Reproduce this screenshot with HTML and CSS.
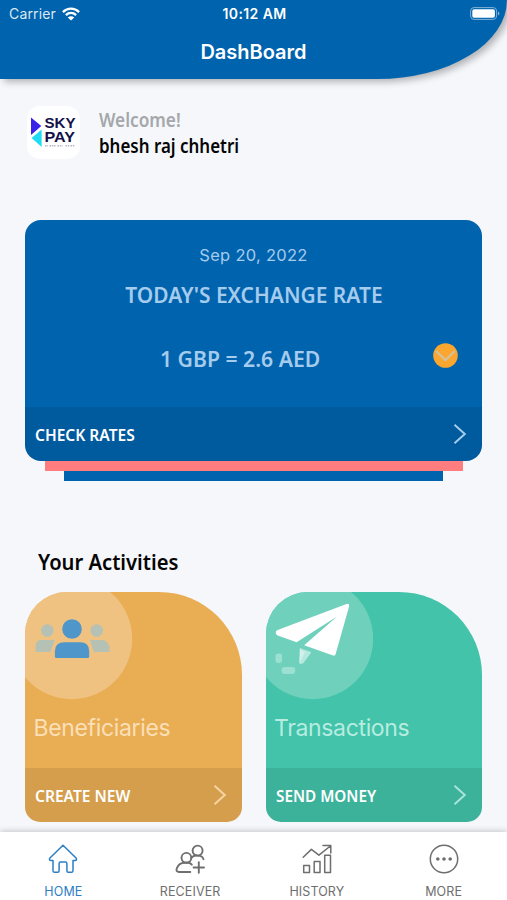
FILE: index.html
```html
<!DOCTYPE html>
<html lang="en">
<head>
<meta charset="utf-8">
<title>DashBoard</title>
<link rel="stylesheet" href="styles.css">
</head>
<body>
<div class="app">
  <header class="header">
    <div class="status">
      <div class="carrier"><span>Carrier</span>
        <svg class="wifi" width="18" height="14" viewBox="0 0 18 14" fill="none" stroke="#fff" stroke-width="2.3"><path d="M.9 5.1C5.6.5 12.4.5 17.1 5.1M3.9 8.1c3-2.8 7.2-2.8 10.2 0"/><path d="M9 13.6 5.8 10.5c1.8-1.6 4.6-1.6 6.4 0z" fill="#fff" stroke="none"/></svg>
      </div>
      <div class="time">10:12 AM</div>
      <svg class="battery" width="30" height="13" viewBox="0 0 30 13"><rect x=".6" y=".6" width="26" height="11.8" rx="3.4" fill="none" stroke="#83b1d8"/><rect x="2.3" y="2.3" width="22.6" height="8.4" rx="1.8" fill="#fff"/><path d="M28 4.5c2 .8 2 3.2 0 4z" fill="#83b1d8"/></svg>
    </div>
    <h1 class="title">DashBoard</h1>
  </header>

  <main class="content">
    <section class="profile">
      <svg class="logo" width="53" height="53" viewBox="0 0 53 53">
        <rect width="53" height="53" rx="13" fill="#fff"/>
        <path d="M4 11.5 14.3 20 4 29z" fill="#3a20e8"/><path d="M14.600 23.500V41L4.600 32z" fill="#20dcf2"/>
        <g class="logo-text"><text x="17.500" y="22" textLength="31" lengthAdjust="spacingAndGlyphs">SKY</text><text x="17.500" y="36" textLength="30.500" lengthAdjust="spacingAndGlyphs">PAY</text></g>
        <path d="M18 39.800h3m1.500 0h6m2 0h5m3 0h4m1 0h4" stroke="#b5b5c2" stroke-width="1.400" stroke-dasharray="1.500 .800"/>
      </svg>
      <div class="greeting">
        <div class="welcome"><span>Welcome!</span></div>
        <div class="name"><span>bhesh raj chhetri</span></div>
      </div>
    </section>

    <section class="rates">
      <div class="rate-card">
        <div class="rate-body">
          <div class="date">Sep 20, 2022</div>
          <div class="rate-title"><span>TODAY'S EXCHANGE RATE</span></div>
          <div class="rate-row">
            <span class="rate-value">1 GBP = 2.6 AED</span>
            <svg class="expand" width="25" height="25" viewBox="0 0 25 25"><circle cx="12.500" cy="12.500" r="12.300" fill="#faa62f"/><path d="m3.200 8 9.300 9.300L21.800 8" fill="none" stroke="#d3c29f" stroke-width="2.100"/></svg>
          </div>
        </div>
        <div class="card-foot"><span class="action check">CHECK RATES</span><svg class="chev" width="14" height="22" viewBox="0 0 14 22"><path d="m1.500 1.800 10.300 9.200L1.500 20.200"/></svg></div>
      </div>
      <div class="layer layer-pink"></div>
      <div class="layer layer-blue"></div>
    </section>

    <h2 class="heading"><span>Your Activities</span></h2>
    <section class="grid">
      <article class="tile orange">
        <div class="tile-body">
          <svg class="art" width="109" height="109" viewBox="0 0 109 109">
            <circle cx="46.800" cy="46.800" r="60.400" fill="#f0c281"/>
            <g fill="#b4c1b4"><circle cx="22.300" cy="38.500" r="6.300"/><circle cx="71.700" cy="38.500" r="6.300"/><path d="M16 48h13.500l-4 12H10.600v-6.500Q11 48 16 48zM65 48h12.500q5 .5 7 6.500V60H69z"/></g>
            <g fill="#4f96ca"><circle cx="47" cy="37" r="9.800"/><path d="M39.500 50.300h15.700q9 0 9 9v5.200q0 1.500-1.500 1.500H31.400q-1.500 0-1.500-1.500v-5.200q0-9 9.600-9z"/></g>
          </svg>
          <div class="label">Beneficiaries</div>
        </div>
        <div class="card-foot"><span class="action create">CREATE NEW</span><svg class="chev" width="14" height="22" viewBox="0 0 14 22"><path d="m1.500 1.800 10.300 9.200L1.500 20.200"/></svg></div>
      </article>
      <article class="tile green">
        <div class="tile-body">
          <svg class="art" width="109" height="109" viewBox="0 0 109 109">
            <circle cx="46.800" cy="46.800" r="60.400" fill="#6fd1bc"/>
            <path d="M11 38.300 80.500 12.100q3.300-1 2.600 2.300L69.500 62.600q-.5 1.600-2.500 1L38.200 53.200 71 24.400 30.600 50.200 11 43.200q-2.500-3 0-4.900z" fill="#fff"/>
            <path d="m33.800 56 11.600 4.200-7.600 10.200q-3.400 3-4.800 0z" fill="#b7e8de"/><path d="M34 57v13l5-10z" fill="#d2f1eb"/>
            <g fill="#9be0d1"><rect x="9.500" y="61.500" width="6.600" height="9.500" rx="3"/><rect x="15.600" y="75" width="13.600" height="7" rx="3"/></g>
          </svg>
          <div class="label">Transactions</div>
        </div>
        <div class="card-foot"><span class="action send">SEND MONEY</span><svg class="chev" width="14" height="22" viewBox="0 0 14 22"><path d="m1.500 1.800 10.300 9.200L1.500 20.200"/></svg></div>
      </article>
    </section>
  </main>

  <nav class="tabs">
    <a class="tab active"><svg width="30" height="30" viewBox="0 0 30 30"><path d="M15 1.200 28.300 14.200Q29 16.500 27.200 16.500H25v10.200q0 1.600-1.600 1.600h-3.200q-1.300 0-1.300-1.500v-7.300q0-1.500-1.400-1.500h-5q-1.400 0-1.400 1.500v7.300q0 1.500-1.300 1.500H6.600Q5 28.300 5 26.700V16.500H2.800Q1 16.500 1.700 14.200z"/></svg><span>HOME</span></a>
    <a class="tab"><svg width="30" height="30" viewBox="0 0 30 30"><g stroke-width="1.900"><circle cx="22.600" cy="6.600" r="5"/><circle cx="11.400" cy="13.800" r="4.900"/><path d="M16.300 13.800Q18.500 11 22.600 11.600q5 0 5.900 3.600M15.300 28H4.200Q.5 28 1.800 24.300 4 18.700 9.500 18.700h4q2 .3 3.300 2M23.800 18.300v10.500M18.600 23.500H29"/></g></svg><span>RECEIVER</span></a>
    <a class="tab"><svg width="30" height="30" viewBox="0 0 30 30"><path d="M1.200 13.300 9.400 5.400l7.500 5.800L28.400 2M21 1.500h7.800V9M1.700 21.500h5.800v7H1.700zM12.200 17.500H18v11h-5.800zM22.700 11.200h5.800v17.300h-5.800z"/></svg><span>HISTORY</span></a>
    <a class="tab"><svg width="30" height="30" viewBox="0 0 30 30"><circle cx="15" cy="15" r="13.700"/><g class="dots"><circle cx="8.800" cy="15" r="1.800"/><circle cx="15" cy="15" r="1.800"/><circle cx="21.200" cy="15" r="1.800"/></g></svg><span>MORE</span></a>
  </nav>
</div>
</body>
</html>
```
FILE: styles.css
```css
* { box-sizing: border-box; }
body { margin: 0; background: #f5f7fb; font-family: Inter, "Liberation Sans", sans-serif; }
.app { width: 507px; height: 900px; display: flex; flex-direction: column; overflow: hidden; }

.header { height: 79px; flex: none; background: #0063ad; color: #fff; border-bottom-right-radius: 130px 79px; box-shadow: 4px 3px 7px rgba(0, 0, 0, .28); }
.status { display: grid; grid-template-columns: 1fr auto 1fr; height: 27px; align-items: center; padding: 0 7px 0 9px; }
.carrier { display: flex; align-items: center; gap: 6px; font-size: 14px; letter-spacing: .15px; color: #dbe9f5; }
.time { font-size: 14px; font-weight: 600; letter-spacing: .4px; }
.battery { justify-self: end; }
.title { margin: 12px 0 0; font-size: 20px; line-height: 26px; font-weight: 600; text-align: center; letter-spacing: 0; }

.content { flex: 1; padding: 27px 25px 0; }
.profile { display: flex; height: 53px; gap: 19px; padding-left: 2px; }
.logo-text { font: 700 15.500px "Liberation Sans", sans-serif; fill: #14124a; }
.greeting, .rate-title, .rate-value, .action, .heading { font-family: "Noto Sans", "Open Sans", sans-serif; font-weight: 600; }
.greeting { font-size: 19px; line-height: 26px; padding-top: 1px; white-space: nowrap; }
.greeting span, .heading span, .rate-title span, .rate-value, .action { display: inline-block; transform-origin: 0 50%; white-space: nowrap; }
.welcome { color: #a5a7ab; }
.name { color: #050505; }
.welcome span { transform: scaleX(.907); }
.name span { transform: scaleX(.892); }

.rates { margin-top: 60.500px; }
.rate-card { height: 241.500px; border-radius: 16px; background: #0063ad; overflow: hidden; display: flex; flex-direction: column; }
.rate-body { flex: 1; color: #a5cbed; text-align: center; padding-top: 24px; }
.date { font-size: 16.500px; line-height: 22px; letter-spacing: .28px; }
.rate-title { font-size: 21.500px; line-height: 30px; margin-top: 14px; }
.rate-title span { transform-origin: 50% 50%; transform: scaleX(.975); }
.rate-row { display: flex; justify-content: space-between; align-items: center; margin-top: 31px; padding: 0 24px 0 135px; height: 30px; font-size: 21.500px; }
.rate-value { transform: scaleX(.985); padding-top: 5px; }
.card-foot { height: 54px; flex: none; display: flex; align-items: center; justify-content: space-between; padding: 0 15px 0 10px; background: rgba(0, 0, 0, .085); color: #fff; font-size: 16.500px; }
.check { transform: scaleX(.942); }
.create { transform: scaleX(.942); }
.send { transform: scaleX(.925); }
.chev { fill: none; stroke: #a5cbed; stroke-width: 2; }
.layer { height: 9.800px; }
.layer-pink { margin: 0 19.500px; background: #ff7c7f; }
.layer-blue { margin: 0 39px; background: #0063ad; }

.heading { margin: 64.500px 0 0 12.500px; font-size: 22px; line-height: 32px; color: #050505; }
.heading span { transform: scaleX(.917); }
.grid { display: grid; grid-template-columns: 1fr 1fr; gap: 24px; margin-top: 15px; }
.tile { height: 230px; border-radius: 42px 83px 15px 15px; overflow: hidden; display: flex; flex-direction: column; }
.tile-body { flex: 1; }
.art { display: block; }
.label { padding-left: 8.500px; margin-top: 13px; font-size: 23px; line-height: 28px; letter-spacing: -.35px; }
.orange { background: #e9ad54; }
.orange .label { color: #fadfb7; }
.orange .chev { stroke: #f5d4a2; }
.green { background: #42c3aa; }
.green .label { color: #b7ece0; }
.green .chev { stroke: #a9e4d8; }

.tabs { height: 68px; flex: none; display: grid; grid-template-columns: repeat(4, 1fr); background: #fff; box-shadow: 0 -1px 6px rgba(0, 0, 0, .2); position: relative; }
.tab { display: flex; flex-direction: column; align-items: center; padding-top: 12px; font-size: 12.500px; line-height: 16px; letter-spacing: .1px; color: #6e6e6e; }
.tab svg { fill: none; stroke: currentColor; stroke-width: 1.5; stroke-linejoin: round; stroke-linecap: round; margin-bottom: 10px; }
.tab .dots { fill: currentColor; stroke: none; }
.active { color: #2d7ec4; }
```
